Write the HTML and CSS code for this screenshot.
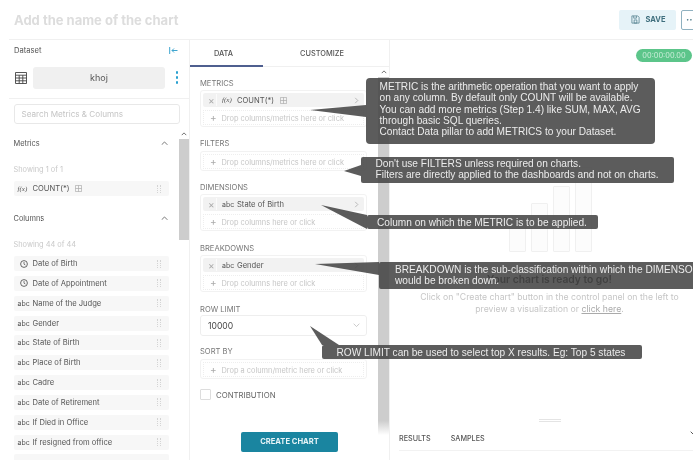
FILE: index.html
```html
<!DOCTYPE html>
<html lang="en">
<head>
<meta charset="utf-8">
<title>Chart builder</title>
<link rel="stylesheet" href="styles.css">
</head>
<body>
<div class="app">
  <header class="top">
    <div class="title">Add the name of the chart</div>
    <div class="save">
      <svg class="save-ico" viewBox="0 0 10 10"><path d="M1 1h6.5L9 2.5V9H1z M3 1v2.5h3V1 M3.5 5.5h3v3.5h-3z" fill="none" stroke="#4a7a88" stroke-width=".8"/></svg>
      <span>SAVE</span>
    </div>
    <div class="more">··</div>
  </header>
  <main class="body">
    <aside class="left">
      <div class="ds-head">
        <span>Dataset</span>
        <svg class="collapse" viewBox="0 0 9 7"><path d="M.7 0v7M8.5 3.5H3M5 1.5 3 3.5l2 2" fill="none" stroke="#3ea5cf" stroke-width="1"/></svg>
      </div>
      <div class="ds-row">
        <svg class="grid-ico" viewBox="0 0 12 12"><path d="M.5.5h11v11H.5zM.5 3.2h11M.5 6h11M.5 8.8h11M4.2 3.2v8.3M7.8 3.2v8.3" fill="none" stroke="#444" stroke-width=".9"/></svg>
        <div class="ds-name">khoj</div>
        <div class="kebab"><i></i><i></i><i></i></div>
      </div>
      <div class="search">Search Metrics &amp; Columns</div>
      <div class="left-scroll">
        <div class="list">
          <div class="sec-head"><span>Metrics</span><svg class="chev" viewBox="0 0 8 5"><path d="M.7 4.3 4 1l3.3 3.3" fill="none" stroke="#555" stroke-width=".9"/></svg></div>
          <div class="showing">Showing 1 of 1</div>
          <div class="row"><span class="ty fx">f(x)</span><span class="nm">COUNT(*)</span><svg class="calc" viewBox="0 0 8 8"><path d="M.5.5h7v7h-7zM.5 4h7M4 .5v7" fill="none" stroke="#aaa" stroke-width=".8"/></svg><span class="drag"></span></div>
          <div class="sec-head sec-cols"><span>Columns</span><svg class="chev" viewBox="0 0 8 5"><path d="M.7 4.3 4 1l3.3 3.3" fill="none" stroke="#555" stroke-width=".9"/></svg></div>
          <div class="showing">Showing 44 of 44</div>
          <div class="row"><span class="ty"><svg class="clock" viewBox="0 0 8 8"><circle cx="4" cy="4" r="3.4" fill="none" stroke="#444" stroke-width=".8"/><path d="M4 2v2.2l1.4.8" fill="none" stroke="#444" stroke-width=".7"/></svg></span><span class="nm">Date of Birth</span><span class="drag"></span></div>
          <div class="row"><span class="ty"><svg class="clock" viewBox="0 0 8 8"><circle cx="4" cy="4" r="3.4" fill="none" stroke="#444" stroke-width=".8"/><path d="M4 2v2.2l1.4.8" fill="none" stroke="#444" stroke-width=".7"/></svg></span><span class="nm">Date of Appointment</span><span class="drag"></span></div>
          <div class="row"><span class="ty">abc</span><span class="nm">Name of the Judge</span><span class="drag"></span></div>
          <div class="row"><span class="ty">abc</span><span class="nm">Gender</span><span class="drag"></span></div>
          <div class="row"><span class="ty">abc</span><span class="nm">State of Birth</span><span class="drag"></span></div>
          <div class="row"><span class="ty">abc</span><span class="nm">Place of Birth</span><span class="drag"></span></div>
          <div class="row"><span class="ty">abc</span><span class="nm">Cadre</span><span class="drag"></span></div>
          <div class="row"><span class="ty">abc</span><span class="nm">Date of Retirement</span><span class="drag"></span></div>
          <div class="row"><span class="ty">abc</span><span class="nm">If Died in Office</span><span class="drag"></span></div>
          <div class="row"><span class="ty">abc</span><span class="nm">If resigned from office</span><span class="drag"></span></div>
          <div class="row"></div>
        </div>
        <div class="bar bar-left"><svg class="bar-up" viewBox="0 0 8 5"><path d="M1 4 4 1l3 3" fill="none" stroke="#555" stroke-width="1.1"/></svg><div class="thumb thumb-left"></div></div>
      </div>
    </aside>
    <section class="mid">
      <div class="tabs">
        <div class="tab tab-data">DATA</div>
        <div class="tab tab-cust">CUSTOMIZE</div>
      </div>
      <div class="mid-scroll">
        <div class="controls">
          <div class="lbl lbl-first">METRICS</div>
          <div class="box">
            <div class="pill"><span class="x">×</span><span class="ty fx">f(x)</span><span class="nm">COUNT(*)</span><svg class="calc" viewBox="0 0 8 8"><path d="M.5.5h7v7h-7zM.5 4h7M4 .5v7" fill="none" stroke="#aaa" stroke-width=".8"/></svg><svg class="pill-chev" viewBox="0 0 5 8"><path d="M1 1l3 3-3 3" fill="none" stroke="#aaa" stroke-width=".9"/></svg></div>
            <div class="drop drop-gap"><span class="plus">+</span>Drop columns/metrics here or click</div>
          </div>
          <div class="lbl">FILTERS</div>
          <div class="box box-gap">
            <div class="drop"><span class="plus">+</span>Drop columns/metrics here or click</div>
          </div>
          <div class="lbl">DIMENSIONS</div>
          <div class="box">
            <div class="pill"><span class="x">×</span><span class="ty">abc</span><span class="nm">State of Birth</span><svg class="pill-chev" viewBox="0 0 5 8"><path d="M1 1l3 3-3 3" fill="none" stroke="#aaa" stroke-width=".9"/></svg></div>
            <div class="drop drop-gap"><span class="plus">+</span>Drop columns here or click</div>
          </div>
          <div class="lbl lbl-wide">BREAKDOWNS</div>
          <div class="box">
            <div class="pill"><span class="x">×</span><span class="ty">abc</span><span class="nm">Gender</span><svg class="pill-chev" viewBox="0 0 5 8"><path d="M1 1l3 3-3 3" fill="none" stroke="#aaa" stroke-width=".9"/></svg></div>
            <div class="drop drop-gap"><span class="plus">+</span>Drop columns here or click</div>
          </div>
          <div class="lbl lbl-wide lbl-flush">ROW LIMIT</div>
          <div class="select"><span>10000</span><svg class="sel-chev" viewBox="0 0 8 5"><path d="M.7.7 4 4 7.3.7" fill="none" stroke="#bbb" stroke-width=".9"/></svg></div>
          <div class="lbl lbl-sort">SORT BY</div>
          <div class="box box-gap">
            <div class="drop"><span class="plus">+</span>Drop a column/metric here or click</div>
          </div>
          <div class="check"><span class="checkbox"></span><span>CONTRIBUTION</span></div>
          <div class="create">CREATE CHART</div>
        </div>
        <div class="bar bar-mid"><svg class="bar-up" viewBox="0 0 8 5"><path d="M1 4 4 1l3 3" fill="none" stroke="#555" stroke-width="1.1"/></svg><div class="thumb thumb-mid"></div></div>
      </div>
    </section>
    <section class="right">
      <div class="timer">00:00:00.00</div>
      <div class="bars"><i class="b1"></i><i class="b2"></i><i class="b3"></i><i class="b4"></i></div>
      <div class="ready">Your chart is ready to go!</div>
      <p class="hint">Click on "Create chart" button in the control panel on the left to<br>preview a visualization or <u>click here</u>.</p>
      <div class="handle"></div>
      <div class="res-tabs"><span>RESULTS</span><span>SAMPLES</span></div>
      <svg class="res-chev" viewBox="0 0 8 5"><path d="M.7.7 4 4 7.3.7" fill="none" stroke="#555" stroke-width="1"/></svg>
    </section>
  </main>

  <svg class="arrows" viewBox="0 0 699 460">
    <polygon points="310,110 366,105 366,117"/>
    <polygon points="344,171 361,165 361,176"/>
    <polygon points="321,205 367,215 367,229"/>
    <polygon points="315,264 379,262 379,275"/>
    <polygon points="310,326 339,345 322,345"/>
  </svg>
  <div class="note note-metric">METRIC is the arithmetic operation that you want to apply<br>on any column. By default only COUNT will be available.<br>You can add more metrics (Step 1.4) like SUM, MAX, AVG<br>through basic SQL queries.<br>Contact Data pillar to add METRICS to your Dataset.</div>
  <div class="note note-filter">Don't use FILTERS unless required on charts.<br>Filters are directly applied to the dashboards and not on charts.</div>
  <div class="note note-col">Column on which the METRIC is to be applied.</div>
  <div class="note note-break">BREAKDOWN is the sub-classification within which the DIMENSON<br>would be broken down.</div>
  <div class="note note-row">ROW LIMIT can be used to select top X results. Eg: Top 5 states</div>
</div>
</body>
</html>
```
FILE: styles.css
```css
* { box-sizing: border-box; }
html, body { margin: 0; padding: 0; background: #fff; }
body { width: 699px; height: 460px; overflow: hidden; }
.app {
  position: relative;
  width: 693px;
  height: 460px;
  padding-left: 9px;
  overflow: hidden;
  font-family: Inter, "Liberation Sans", sans-serif;
  color: #555;
  filter: blur(.5px);
}
.top {
  display: flex;
  align-items: center;
  height: 40px;
  padding-left: 5px;
  border-bottom: 1px solid #f0f0f0;
}
.title { flex: 1; font-size: 13px; font-weight: 700; color: #dddddd; }
.save {
  display: flex;
  align-items: center;
  gap: 5.5px;
  width: 57px;
  height: 20px;
  padding-left: 12px;
  border-radius: 2px;
  background: #e6f3f8;
  color: #3f6f7e;
  font-size: 7.5px;
  font-weight: 700;
}
.save-ico { width: 9px; height: 9px; }
.more {
  width: 14px;
  height: 20px;
  margin-left: 5px;
  margin-right: -2px;
  border: 1px solid #8fb1c0;
  border-radius: 2px;
  color: #4a7a88;
  font-size: 10px;
  font-weight: 700;
  line-height: 17px;
  padding-left: 4px;
}
.body { display: flex; height: 420px; }

/* left panel */
.left { width: 181px; border-right: 1px solid #f0f0f0; flex: none; }
.ds-head {
  display: flex;
  justify-content: space-between;
  align-items: center;
  height: 20px;
  padding: 0 11px 0 5px;
  font-size: 7.6px;
  color: #555;
}
.collapse { width: 9px; height: 7px; }
.ds-row {
  display: flex;
  align-items: center;
  height: 32px;
  margin-top: 7px;
  padding: 0 8px 10px 6px;
  border-bottom: 1px solid #f0f0f0;
}
.grid-ico { width: 12px; height: 12px; flex: none; }
.ds-name {
  width: 132px;
  height: 22px;
  margin-left: 6px;
  border-radius: 3px;
  background: #f0f0f0;
  font-size: 9px;
  line-height: 22px;
  text-align: center;
  color: #555;
}
.kebab { display: flex; flex-direction: column; gap: 2.6px; margin-left: 11px; }
.kebab i { width: 2.4px; height: 2.4px; border-radius: 50%; background: #29a0d0; }
.search {
  width: 166px;
  height: 20px;
  margin: 5px 0 0 4.5px;
  padding-left: 7px;
  border: 1px solid #e8e8e8;
  border-radius: 3px;
  font-size: 8.15px;
  line-height: 18px;
  color: #c4c4c4;
}
.left-scroll { display: flex; height: 331px; margin-top: 5px; overflow: hidden; }
.list { width: 170px; flex: none; padding-left: 4.5px; }
.bar { width: 10px; flex: none; position: relative; }
.bar-up { display: block; width: 6px; height: 4px; margin: 3px auto 3px; }
.thumb { width: 100%; background: #cdcdcd; }
.thumb-left { height: 101px; }
.sec-head {
  display: flex;
  justify-content: space-between;
  align-items: center;
  width: 155px;
  height: 14px;
  margin-top: 7px;
  padding: 0 1px 0 0;
  font-size: 7.4px;
  color: #555;
}
.sec-cols { margin-top: 15px; }
.chev { width: 7px; height: 4.5px; }
.showing { height: 14px; margin-top: 13px; font-size: 7.4px; line-height: 14px; color: #c9c9c9; }
.showing + .row { margin-top: 4px; }
.row {
  display: flex;
  align-items: center;
  width: 155px;
  height: 15px;
  margin-bottom: 4.85px;
  border-radius: 2px;
  background: #f7f7f7;
  font-size: 7.6px;
  color: #555;
}
.ty { width: 15px; margin-left: 4px; font-size: 7px; color: #555; flex: none; text-align: left; }
.fx { font-family: "Liberation Serif", serif; font-style: italic; font-size: 7px; }
.clock { display: block; width: 8px; height: 8px; margin-left: 2px; }
.nm { white-space: nowrap; }
.calc { width: 7px; height: 7px; margin-left: 6px; }
.drag {
  width: 4px;
  height: 8px;
  margin-left: auto;
  margin-right: 8px;
  border-left: 1px dotted #d4d4d4;
  border-right: 1px dotted #d4d4d4;
}

/* middle panel */
.mid { width: 200px; flex: none; border-right: 1px solid #f0f0f0; }
.tabs { display: flex; height: 27px; border-bottom: 1px solid #f0f0f0; }
.tab { font-size: 7.4px; font-weight: 500; text-align: center; line-height: 27px; color: #555; }
.tab-data { width: 73px; height: 27px; padding-right: 6px; border-bottom: 2px solid #4f5f8f; }
.tab-cust { width: 118px; }
.mid-scroll { display: flex; height: 393px; overflow: hidden; }
.controls { width: 188px; flex: none; padding-left: 10px; }
.bar-mid { width: 11px; }
.thumb-mid { height: 358px; background: linear-gradient(#cdcdcd 96%, #fff); }
.lbl { height: 12px; margin-top: 10px; font-size: 7.6px; line-height: 14px; color: #777; }
.lbl-first { margin-top: 10px; }
.lbl-wide { margin-top: 11px; }
.box {
  width: 167px;
  margin-top: 1px;
  padding: 2px 2px 1px;
  border: 1px solid #f2f2f2;
  border-radius: 3px;
}
.box-gap { margin-top: 2px; }
.pill {
  display: flex;
  align-items: center;
  height: 14px;
  border-radius: 2px;
  background: #f2f2f2;
  font-size: 7.6px;
  color: #555;
}
.x { width: 14px; padding-left: 5px; font-size: 10px; color: #aaa; border-right: 1px solid #fbfbfb; flex: none; }
.pill .ty { margin-left: 5px; }
.pill-chev { width: 5px; height: 7px; margin-left: auto; margin-right: 5px; }
.drop {
  height: 15px;
  padding-left: 6px;
  border: 1px dotted #eee;
  font-size: 7.4px;
  line-height: 13px;
  color: #c6c6c6;
  white-space: nowrap;
}
.drop-gap { margin-top: 3px; }
.plus { display: inline-block; width: 11.5px; font-size: 10px; color: #aaa; }
.select {
  display: flex;
  justify-content: space-between;
  align-items: center;
  width: 167px;
  height: 21px;
  padding: 0 6px 0 7px;
  border: 1px solid #eee;
  border-radius: 3px;
  font-size: 8.6px;
  color: #444;
}
.sel-chev { width: 7px; height: 4.5px; }
.lbl-sort { margin-top: 9px; }
.check { display: flex; align-items: center; gap: 5px; margin-top: 10px; font-size: 7.8px; color: #666; }
.checkbox { width: 11px; height: 11px; border: 1px solid #ddd; border-radius: 1px; }
.create {
  width: 97px;
  height: 20px;
  margin: 32px 0 0 41px;
  border-radius: 2px;
  background: #1a85a0;
  color: #e8f4f7;
  font-size: 7.6px;
  font-weight: 700;
  line-height: 20px;
  text-align: center;
}

/* right panel */
.right { position: relative; flex: 1; min-width: 0; padding-top: 9px; }
.timer {
  width: 56px;
  height: 13px;
  margin-left: auto;
  margin-right: 1px;
  border-radius: 7px;
  background: #5cc58a;
  color: #cdeedb;
  font-size: 7.4px;
  line-height: 13px;
  text-align: center;
}
.bars { display: flex; align-items: flex-end; gap: 5px; height: 85px; margin: 105px 0 0 119px; }
.bars i { width: 17px; border: 1px solid #f0f0f0; border-radius: 1px; background: #fcfcfc; }
.b1 { height: 33px; }
.b2 { height: 49px; }
.b3 { height: 66px; }
.b4 { height: 85px; }
.ready { margin-top: 21px; font-size: 10.3px; font-weight: 600; line-height: 12px; text-align: center; color: #222; padding-left: 16px; }
.hint { margin: 6px 0 0; font-size: 8.7px; line-height: 12px; text-align: center; color: #c6c6c6; padding-left: 16px; white-space: nowrap; }
.hint u { color: #aaa; }
.handle { width: 22px; height: 3px; margin: 104px 0 0 149px; border-top: 1px solid #e4e4e4; border-bottom: 1px solid #e4e4e4; }
.res-tabs {
  display: flex;
  gap: 20px;
  margin: 10.5px 0 0 9px;
  padding-bottom: 5.5px;
  border-bottom: 1px solid #f2f2f2;
  font-size: 7.2px;
  font-weight: 500;
  line-height: 12px;
  color: #555;
}
.res-chev { position: absolute; right: -5px; top: 391px; width: 8px; height: 5px; }

/* annotations placed over the screenshot */
.arrows { position: absolute; left: 0; top: 0; width: 699px; height: 460px; pointer-events: none; }
.arrows polygon { fill: rgba(70, 70, 70, .88); }
.note {
  position: absolute;
  background: rgba(70, 70, 70, .88);
  border-radius: 2px;
  color: #ececec;
  font-family: "Liberation Sans", Arial, sans-serif;
  font-size: 10.15px;
  line-height: 11.3px;
  white-space: nowrap;
}
.note-metric { left: 366px; top: 78px; width: 289px; height: 66px; padding: 3px 0 0 13.5px; border-radius: 4px; }
.note-filter { left: 361px; top: 157px; width: 313px; height: 26px; padding: 1px 0 0 14.5px; }
.note-col { left: 367px; top: 215px; width: 231px; height: 14px; padding: 1.5px 0 0 10px; }
.note-break { left: 379px; top: 262px; width: 330px; height: 27px; padding: 1.5px 0 0 16px; }
.note-row { left: 322px; top: 345px; width: 320px; height: 14px; padding: 1.5px 0 0 14.5px; }
```
